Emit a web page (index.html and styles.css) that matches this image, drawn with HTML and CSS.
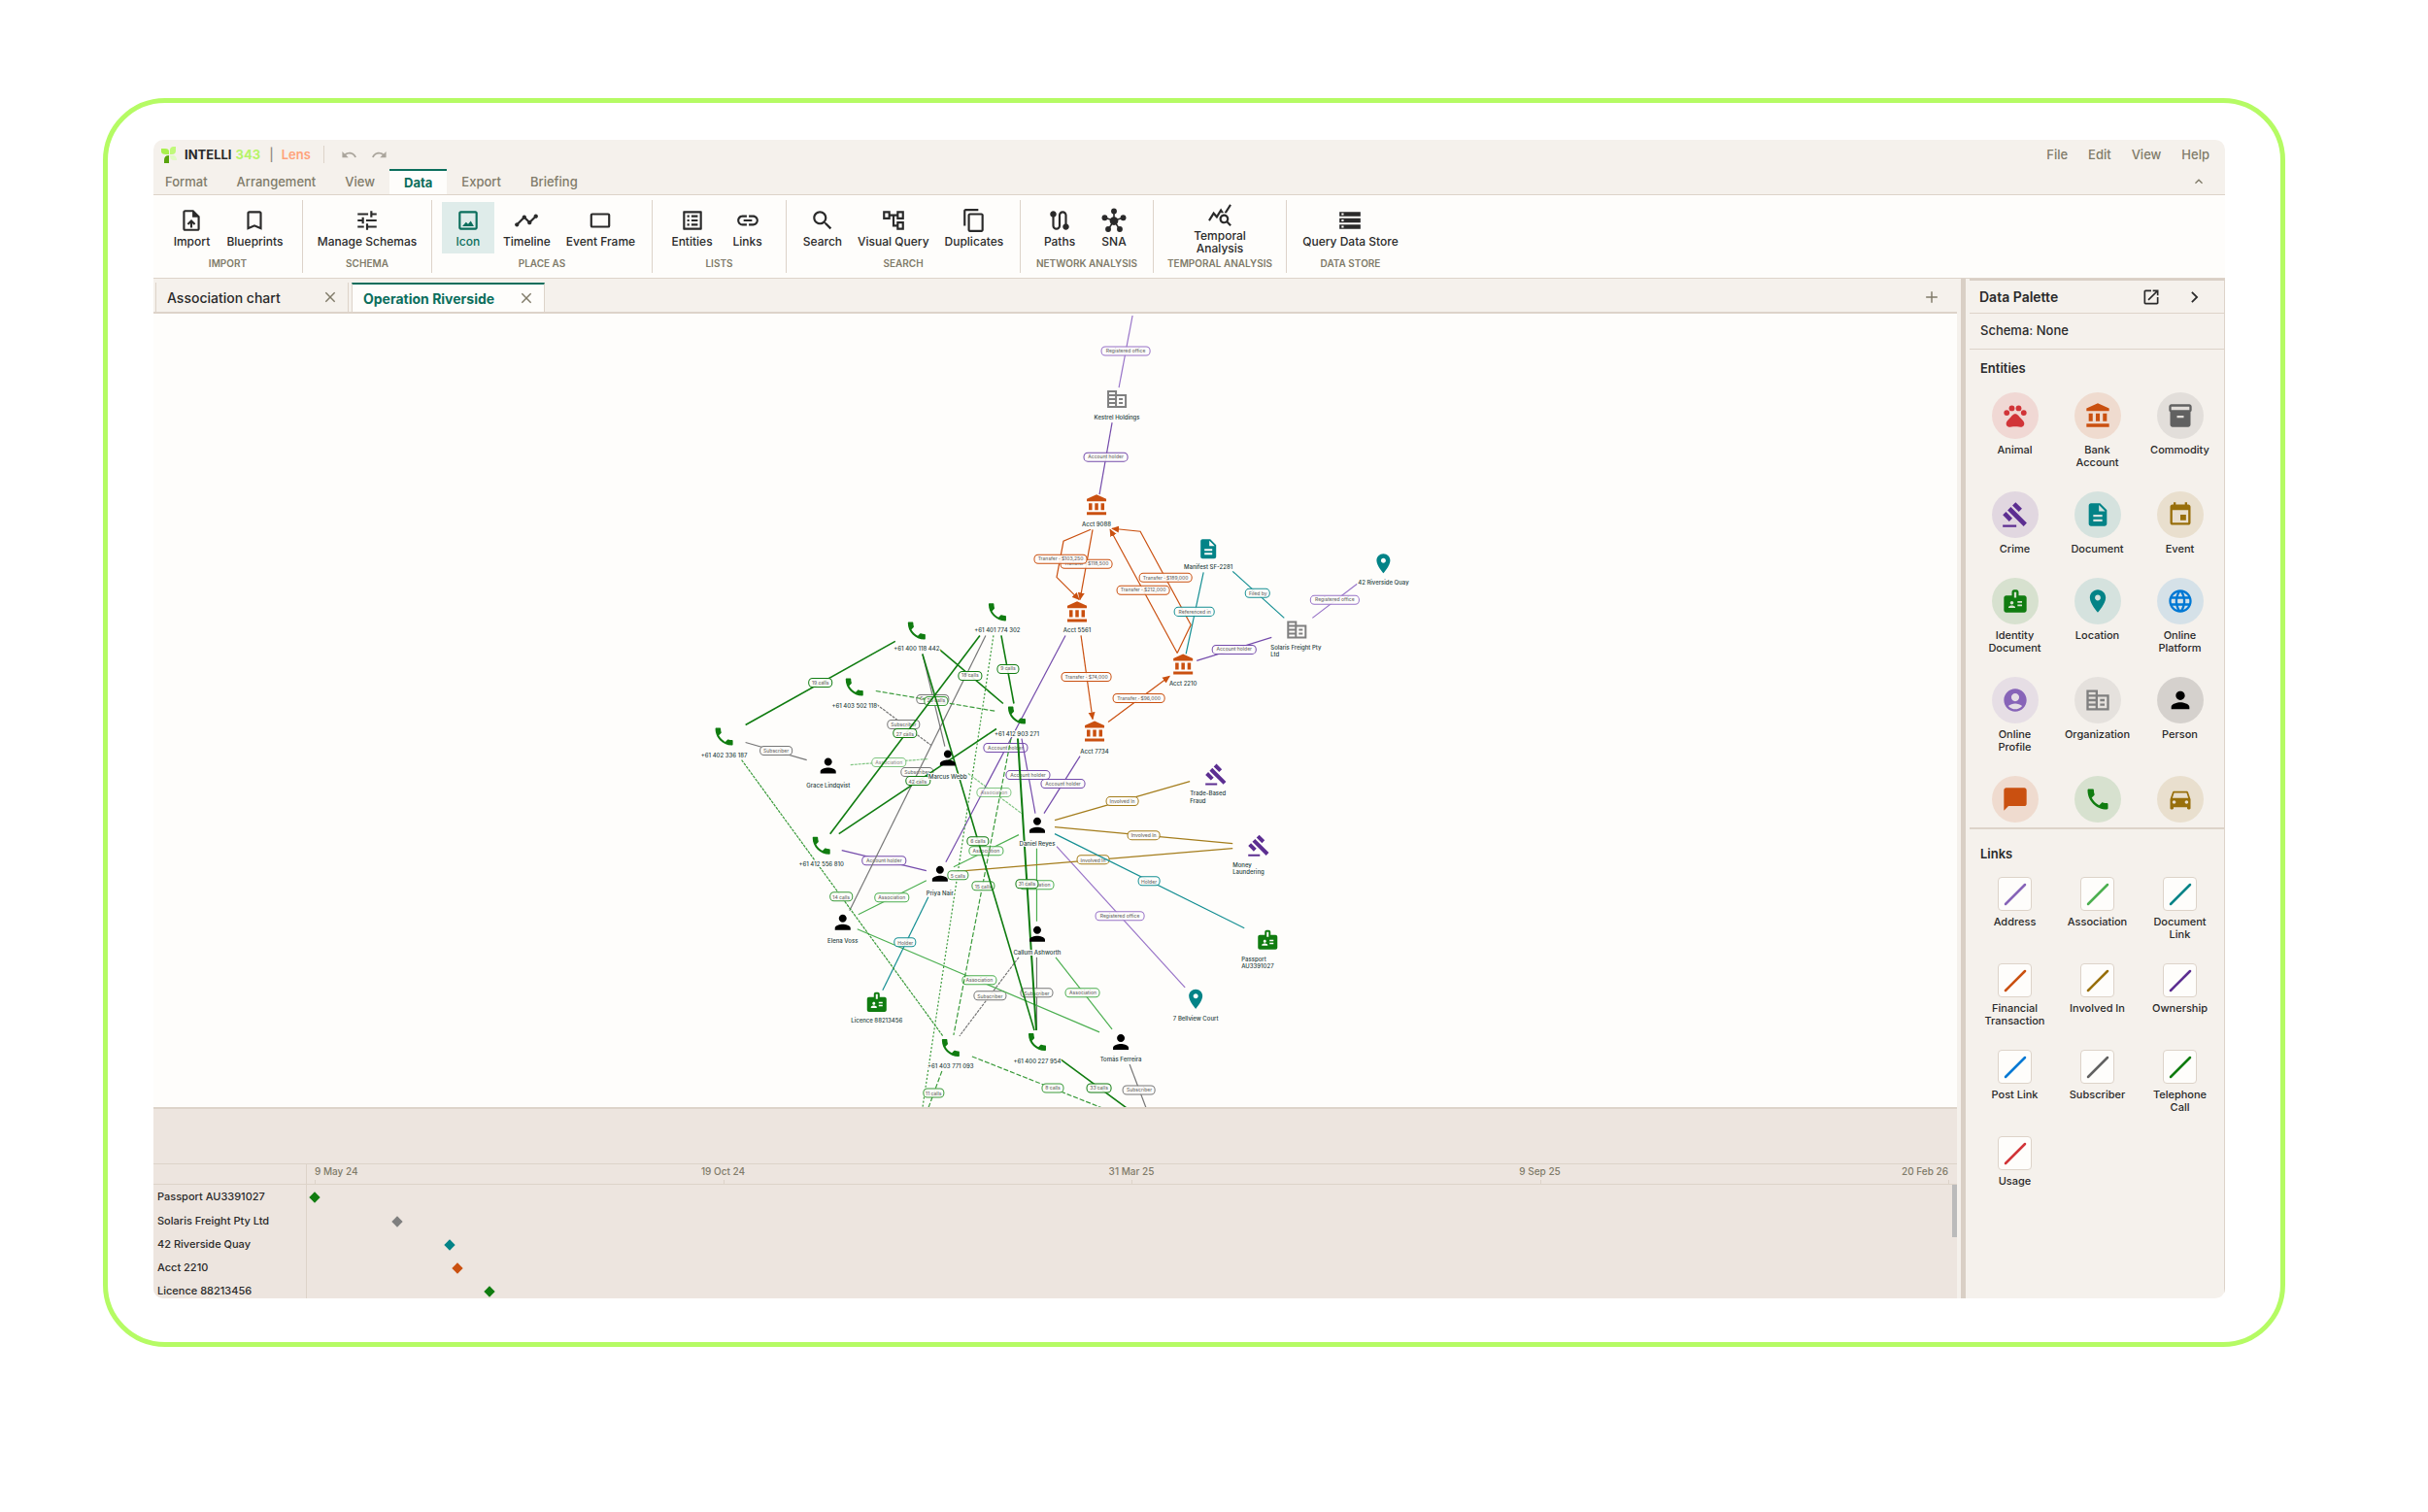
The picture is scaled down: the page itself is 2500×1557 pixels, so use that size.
FILE: index.html
```html
<!DOCTYPE html>
<html lang="en">
<head>
<meta charset="utf-8">
<title>INTELLI 343 | Lens – Operation Riverside</title>
<meta name="viewport" content="width=device-width, initial-scale=1">
<link rel="stylesheet" href="styles.css">
</head>
<body>
<svg class="sprite" aria-hidden="true">
  <symbol id="i-import" viewBox="0 0 24 24"><path d="M14 2H6c-1.1 0-1.99.9-1.99 2L4 20c0 1.1.89 2 1.99 2H18c1.1 0 2-.9 2-2V8l-6-6zm4 18H6V4h7v5h5v11zM8 15.01l1.41 1.41L11 14.84V19h2v-4.16l1.59 1.59L16 15.01 12.01 11 8 15.01z"/></symbol>
  <symbol id="i-bookmark" viewBox="0 0 24 24"><path d="M17 3H7c-1.1 0-1.99.9-1.99 2L5 21l7-3 7 3V5c0-1.1-.9-2-2-2zm0 15l-5-2.18L7 18V5h10v13z"/></symbol>
  <symbol id="i-tune" viewBox="0 0 24 24"><path d="M3 17v2h6v-2H3zM3 5v2h10V5H3zm10 16v-2h8v-2h-8v-2h-2v6h2zM7 9v2H3v2h4v2h2V9H7zm14 4v-2H11v2h10zm-6-4h2V7h4V5h-4V3h-2v6z"/></symbol>
  <symbol id="i-image" viewBox="0 0 24 24"><path d="M19 5v14H5V5h14m0-2H5c-1.1 0-2 .9-2 2v14c0 1.1.9 2 2 2h14c1.1 0 2-.9 2-2V5c0-1.1-.9-2-2-2zm-4.5 9.5l-2.5 3-2-2L6.500 17.500h11z"/></symbol>
  <symbol id="i-timeline" viewBox="0 0 24 24"><path d="M23 8c0 1.1-.9 2-2 2-.18 0-.35-.02-.51-.07l-3.56 3.55c.05.16.07.34.07.52 0 1.1-.9 2-2 2s-2-.9-2-2c0-.18.02-.36.07-.52l-2.55-2.55c-.16.05-.34.07-.52.07s-.36-.02-.52-.07l-4.55 4.56c.05.16.07.33.07.51 0 1.1-.9 2-2 2s-2-.9-2-2 .9-2 2-2c.18 0 .35.02.51.07l4.56-4.55C8.02 9.36 8 9.18 8 9c0-1.1.9-2 2-2s2 .9 2 2c0 .18-.02.36-.07.52l2.55 2.55c.16-.05.34-.07.52-.07s.36.02.52.07l3.55-3.56C19.02 8.35 19 8.18 19 8c0-1.1.9-2 2-2s2 .9 2 2z"/></symbol>
  <symbol id="i-frame" viewBox="0 0 24 24"><rect x="3.500" y="6" width="17" height="12" rx="1" fill="none" stroke="currentColor" stroke-width="2"/></symbol>
  <symbol id="i-list" viewBox="0 0 24 24"><path d="M19 5v14H5V5h14m1.1-2H3.900c-.5 0-.9.4-.9.9v16.200c0 .4.4.9.9.9h16.200c.4 0 .9-.5.9-.9V3.900c0-.5-.5-.9-.9-.9zM11 7h6v2h-6V7zm0 4h6v2h-6v-2zm0 4h6v2h-6zM7 7h2v2H7zm0 4h2v2H7zm0 4h2v2H7z"/></symbol>
  <symbol id="i-link" viewBox="0 0 24 24"><path d="M3.9 12c0-1.71 1.39-3.1 3.1-3.1h4V7H7c-2.76 0-5 2.24-5 5s2.24 5 5 5h4v-1.9H7c-1.71 0-3.1-1.39-3.1-3.1zM8 13h8v-2H8v2zm9-6h-4v1.9h4c1.71 0 3.1 1.39 3.1 3.1s-1.39 3.1-3.1 3.1h-4V17h4c2.76 0 5-2.24 5-5s-2.24-5-5-5z"/></symbol>
  <symbol id="i-search" viewBox="0 0 24 24"><path d="M15.5 14h-.79l-.28-.27C15.41 12.59 16 11.11 16 9.5 16 5.91 13.09 3 9.5 3S3 5.91 3 9.5 5.91 16 9.5 16c1.61 0 3.09-.59 4.23-1.57l.27.28v.79l5 4.99L20.49 19l-4.99-5zm-6 0C7.01 14 5 11.99 5 9.5S7.01 5 9.5 5 14 7.01 14 9.5 11.99 14 9.5 14z"/></symbol>
  <symbol id="i-tree" viewBox="0 0 24 24"><path d="M22 11V3h-7v3H9V3H2v8h7V8h2v10h4v3h7v-8h-7v3h-2V8h2v3h7zM7 9H4V5h3v4zm10 6h3v4h-3v-4zm0-10h3v4h-3V5z"/></symbol>
  <symbol id="i-copy" viewBox="0 0 24 24"><path d="M16 1H4c-1.1 0-2 .9-2 2v14h2V3h12V1zm3 4H8c-1.1 0-2 .9-2 2v14c0 1.1.9 2 2 2h11c1.1 0 2-.9 2-2V7c0-1.1-.9-2-2-2zm0 16H8V7h11v14z"/></symbol>
  <symbol id="i-route" viewBox="0 0 24 24"><path d="M19 15.18V7c0-2.21-1.79-4-4-4s-4 1.79-4 4v10c0 1.1-.9 2-2 2s-2-.9-2-2V8.82C8.16 8.4 9 7.3 9 6c0-1.66-1.34-3-3-3S3 4.34 3 6c0 1.3.84 2.4 2 2.82V17c0 2.21 1.79 4 4 4s4-1.79 4-4V7c0-1.1.9-2 2-2s2 .9 2 2v8.180c-1.16.41-2 1.51-2 2.82 0 1.66 1.34 3 3 3s3-1.34 3-3c0-1.3-.84-2.4-2-2.82z"/></symbol>
  <symbol id="i-hub" viewBox="0 0 24 24"><path d="M12 12V3M12 12L3 9.500M12 12l9-2.500M12 12l-5 8M12 12l5 8" stroke="currentColor" stroke-width="1.500"/><circle cx="12" cy="12.500" r="4"/><circle cx="12" cy="3.200" r="2.700"/><circle cx="3.200" cy="9.500" r="2.700"/><circle cx="20.800" cy="9.500" r="2.700"/><circle cx="6.500" cy="20.300" r="2.700"/><circle cx="17.500" cy="20.300" r="2.700"/></symbol>
  <symbol id="i-stats" viewBox="0 0 24 24"><path d="M19.88 18.47c.44-.7.7-1.51.7-2.39 0-2.49-2.01-4.5-4.5-4.5s-4.5 2.01-4.5 4.5 2.01 4.5 4.49 4.5c.88 0 1.7-.26 2.39-.7L21.58 23 23 21.58l-3.12-3.11zm-3.8.11c-1.38 0-2.5-1.12-2.5-2.5s1.12-2.5 2.5-2.5 2.5 1.12 2.5 2.5-1.12 2.5-2.5 2.5zm-.36-8.5c-.74.02-1.45.18-2.1.45l-.55-.83-3.8 6.18-3.01-3.52-3.63 5.81L1 17l5-8 3 3.5L13 6l2.72 4.08zm2.59.5c-.64-.28-1.33-.45-2.05-.49L21.38 2 23 3.18l-4.69 7.4z"/></symbol>
  <symbol id="i-storage" viewBox="0 0 24 24"><path d="M2 20h20v-4H2v4zm2-3h2v2H4v-2zM2 4v4h20V4H2zm4 3H4V5h2v2zm-4 7h20v-4H2v4zm2-3h2v2H4v-2z"/></symbol>
  <symbol id="i-undo" viewBox="0 0 24 24"><path d="M12.5 8c-2.65 0-5.05.99-6.9 2.6L2 7v9h9l-3.62-3.62c1.39-1.16 3.16-1.88 5.12-1.88 3.54 0 6.55 2.31 7.6 5.5l2.37-.78C21.08 11.03 17.15 8 12.5 8z"/></symbol>
  <symbol id="i-redo" viewBox="0 0 24 24"><path d="M18.4 10.6C16.55 8.99 14.15 8 11.5 8c-4.65 0-8.58 3.03-9.96 7.22L3.900 16c1.05-3.19 4.05-5.5 7.6-5.5 1.95 0 3.73.72 5.12 1.88L13 16h9V7l-3.600 3.600z"/></symbol>
  <symbol id="i-up" viewBox="0 0 24 24"><path d="M12 8l-6 6 1.410 1.410L12 10.830l4.590 4.580L18 14z"/></symbol>
  <symbol id="i-right" viewBox="0 0 24 24"><path d="M9 5L7.500 6.500 13 12l-5.500 5.500L9 19l7-7z"/></symbol>
  <symbol id="i-close" viewBox="0 0 24 24"><path d="M4 4l16 16M20 4L4 20" fill="none" stroke="currentColor" stroke-width="2.500"/></symbol>
  <symbol id="i-plus" viewBox="0 0 24 24"><path d="M12 2v20M2 12h20" fill="none" stroke="currentColor" stroke-width="2.500"/></symbol>
  <symbol id="i-open" viewBox="0 0 24 24"><path d="M19 19H5V5h7V3H5c-1.110 0-2 .9-2 2v14c0 1.100.89 2 2 2h14c1.100 0 2-.9 2-2v-7h-2v7zM14 3v2h3.590l-9.830 9.830 1.410 1.410L19 6.410V10h2V3h-7z"/></symbol>
  <symbol id="i-paw" viewBox="0 0 24 24"><circle cx="4.500" cy="9.500" r="2.500"/><circle cx="9" cy="5.500" r="2.500"/><circle cx="15" cy="5.500" r="2.500"/><circle cx="19.500" cy="9.500" r="2.500"/><path d="M17.34 14.86c-.87-1.02-1.6-1.89-2.48-2.91-.46-.54-1.05-1.08-1.75-1.32-.11-.04-.22-.07-.33-.09-.25-.04-.52-.04-.78-.04s-.53 0-.79.05c-.11.02-.22.05-.33.09-.7.24-1.28.78-1.75 1.32-.87 1.02-1.6 1.89-2.48 2.91-1.31 1.31-2.92 2.76-2.62 4.79.29 1.02 1.02 2.03 2.33 2.32.73.15 3.06-.44 5.54-.44h.18c2.48 0 4.81.58 5.54.44 1.31-.29 2.04-1.31 2.33-2.32.31-2.04-1.3-3.49-2.61-4.8z"/></symbol>
  <symbol id="i-bank" viewBox="0 0 24 24"><path d="M4 10v7h3.500v-7zM10.250 10v7h3.500v-7zM16.500 10v7H20v-7zM2 19v3h20v-3zM12 1L2 5.500V8h20V5.500z"/></symbol>
  <symbol id="i-box" viewBox="0 0 24 24"><path d="M20 2H4c-1 0-2 .9-2 2v3.010c0 .72.43 1.34 1 1.690V20c0 1.100 1.100 2 2 2h14c.9 0 2-.9 2-2V8.700c.57-.35 1-.97 1-1.690V4c0-1.100-1-2-2-2zm-5 12H9v-2h6v2zm5-7H4V4h16v3z"/></symbol>
  <symbol id="i-gavel" viewBox="0 0 24 24"><path d="M1 21h12v2H1zM5.245 8.070l2.830-2.827 14.140 14.142-2.828 2.828zM12.317 1l5.657 5.656-2.830 2.830-5.654-5.660zM3.825 9.485l5.657 5.657-2.828 2.828-5.657-5.657z"/></symbol>
  <symbol id="i-doc" viewBox="0 0 24 24"><path d="M14 2H6c-1.1 0-1.99.9-1.99 2L4 20c0 1.1.89 2 1.99 2H18c1.1 0 2-.9 2-2V8l-6-6zm2 16H8v-2h8v2zm0-4H8v-2h8v2zm-3-5V3.500L18.500 9H13z"/></symbol>
  <symbol id="i-event" viewBox="0 0 24 24"><path d="M17 12h-5v5h5v-5zM16 1v2H8V1H6v2H5c-1.110 0-1.990.9-1.990 2L3 19c0 1.100.89 2 2 2h14c1.100 0 2-.9 2-2V5c0-1.100-.9-2-2-2h-1V1h-2zm3 18H5V8h14v11z"/></symbol>
  <symbol id="i-badge" viewBox="0 0 24 24"><path d="M20 7h-5V4c0-1.1-.9-2-2-2h-2c-1.1 0-2 .9-2 2v3H4c-1.1 0-2 .9-2 2v11c0 1.1.9 2 2 2h16c1.1 0 2-.9 2-2V9c0-1.1-.9-2-2-2zM9 12c.83 0 1.5.67 1.5 1.5S9.83 15 9 15s-1.5-.67-1.5-1.5S8.17 12 9 12zm3 6H6v-.75c0-1 2-1.5 3-1.5s3 .5 3 1.5V18zm1-9h-2V4h2v5zm5 7.5h-4V15h4v1.5zm0-3h-4V12h4v1.5z"/></symbol>
  <symbol id="i-pin" viewBox="0 0 24 24"><path d="M12 2C8.13 2 5 5.13 5 9c0 5.25 7 13 7 13s7-7.75 7-13c0-3.87-3.13-7-7-7zm0 9.5c-1.38 0-2.5-1.12-2.5-2.5s1.12-2.5 2.5-2.5 2.5 1.12 2.5 2.5-1.12 2.5-2.5 2.5z"/></symbol>
  <symbol id="i-globe" viewBox="0 0 24 24"><path d="M11.99 2C6.47 2 2 6.48 2 12s4.47 10 9.99 10C17.52 22 22 17.52 22 12S17.52 2 11.99 2zm6.93 6h-2.95c-.32-1.25-.78-2.45-1.38-3.56 1.84.63 3.37 1.91 4.33 3.56zM12 4.04c.83 1.2 1.48 2.53 1.91 3.96h-3.82c.43-1.43 1.08-2.76 1.91-3.96zM4.26 14C4.1 13.36 4 12.69 4 12s.1-1.36.26-2h3.38c-.08.66-.14 1.32-.14 2 0 .68.06 1.34.14 2H4.26zm.82 2h2.95c.32 1.25.78 2.45 1.38 3.56-1.84-.63-3.37-1.9-4.33-3.56zm2.95-8H5.08c.96-1.66 2.49-2.93 4.33-3.56C8.81 5.55 8.35 6.75 8.03 8zM12 19.96c-.83-1.2-1.48-2.53-1.91-3.96h3.82c-.43 1.43-1.08 2.76-1.91 3.96zM14.34 14H9.66c-.09-.66-.16-1.32-.16-2 0-.68.07-1.35.16-2h4.68c.09.65.16 1.32.16 2 0 .68-.07 1.34-.16 2zm.25 5.56c.6-1.11 1.06-2.31 1.38-3.56h2.95c-.96 1.65-2.49 2.93-4.33 3.56zM16.36 14c.08-.66.14-1.32.14-2 0-.68-.06-1.34-.14-2h3.38c.16.64.26 1.31.26 2s-.1 1.36-.26 2h-3.38z"/></symbol>
  <symbol id="i-profile" viewBox="0 0 24 24"><path d="M12 2C6.48 2 2 6.48 2 12s4.48 10 10 10 10-4.48 10-10S17.52 2 12 2zm0 4c1.93 0 3.500 1.570 3.500 3.500S13.930 13 12 13s-3.500-1.570-3.500-3.500S10.070 6 12 6zm0 14c-2.030 0-4.430-.82-6.140-2.880C7.550 15.800 9.680 15 12 15s4.450.8 6.140 2.120C16.430 19.180 14.030 20 12 20z"/></symbol>
  <symbol id="i-org" viewBox="0 0 24 24"><path fill-rule="evenodd" d="M2 3h10v4h10v14H2zM4 5v2h6V5zM4 9v2h6V9zM4 13v2h6v-2zM4 17v2h6v-2zM12 9v10h8V9zM14 11h4v2h-4zM14 15h4v2h-4z"/></symbol>
  <symbol id="i-person" viewBox="0 0 24 24"><path d="M12 12c2.21 0 4-1.79 4-4s-1.79-4-4-4-4 1.79-4 4 1.79 4 4 4zm0 2c-2.67 0-8 1.34-8 4v2h16v-2c0-2.66-5.33-4-8-4z"/></symbol>
  <symbol id="i-chat" viewBox="0 0 24 24"><path d="M20 2H4c-1.1 0-2 .9-2 2v18l4-4h14c1.1 0 2-.9 2-2V4c0-1.1-.9-2-2-2z"/></symbol>
  <symbol id="i-phone" viewBox="0 0 24 24"><path d="M6.62 10.79c1.44 2.83 3.76 5.14 6.59 6.59l2.2-2.2c.27-.27.67-.36 1.02-.24 1.12.37 2.33.57 3.57.57.55 0 1 .45 1 1V20c0 .55-.45 1-1 1-9.39 0-17-7.61-17-17 0-.55.45-1 1-1h3.5c.55 0 1 .45 1 1 0 1.25.2 2.45.57 3.57.11.35.03.74-.25 1.02l-2.2 2.2z"/></symbol>
  <symbol id="i-car" viewBox="0 0 24 24"><path d="M18.92 6.01C18.72 5.42 18.16 5 17.5 5h-11c-.66 0-1.21.42-1.42 1.01L3 12v8c0 .55.45 1 1 1h1c.55 0 1-.45 1-1v-1h12v1c0 .55.45 1 1 1h1c.55 0 1-.45 1-1v-8l-2.08-5.99zM6.5 16c-.83 0-1.5-.67-1.5-1.5S5.67 13 6.5 13s1.5.67 1.5 1.5S7.33 16 6.5 16zm11 0c-.83 0-1.5-.67-1.5-1.5s.67-1.5 1.5-1.5 1.5.67 1.5 1.5-.67 1.5-1.5 1.5zM5 11l1.5-4.5h11L19 11H5z"/></symbol>
  <symbol id="i-line" viewBox="0 0 24 24"><path d="M2 22L22 2" fill="none" stroke="currentColor" stroke-width="2.500" stroke-linecap="round"/></symbol>
</svg>

<main class="frame">
  <div class="app">
    <header class="titlebar">
      <svg class="logo" viewBox="0 0 16 17" aria-hidden="true">
        <path d="M9 8V3.500Q9 .5 12 0h3v4q0 4-4 4z" fill="#c0f97a"/>
        <path d="M0 2h4q4 0 4 3v3H5Q0 8 0 5z" fill="#a9f04c"/>
        <path d="M8 9v8H3v-3q0-5 5-5z" fill="#58a30c"/>
        <path d="M9 9h4q3 1 3 5h-3q-4 0-4-5z" fill="#e1fbc4"/>
      </svg>
      <h1 class="brand">INTELLI <span class="brand-num">343</span></h1>
      <span class="brand-bar">|</span>
      <span class="brand-product">Lens</span>
      <span class="rule"></span>
      <button class="history" aria-label="Undo"><svg class="ico"><use href="#i-undo"/></svg></button>
      <button class="history" aria-label="Redo"><svg class="ico"><use href="#i-redo"/></svg></button>
      <nav class="menubar" aria-label="Application menu">
        <button>File</button><button>Edit</button><button>View</button><button>Help</button>
      </nav>
    </header>

    <nav class="tabs" aria-label="Ribbon tabs">
      <button>Format</button><button>Arrangement</button><button>View</button><button class="on">Data</button><button>Export</button><button>Briefing</button>
      <button class="collapse" aria-label="Collapse ribbon"><svg class="ico"><use href="#i-up"/></svg></button>
    </nav>

    <section class="ribbon" aria-label="Data tools">
      <div class="group"><div class="tools">
        <button class="tool"><svg class="ico"><use href="#i-import"/></svg>Import</button>
        <button class="tool"><svg class="ico"><use href="#i-bookmark"/></svg>Blueprints</button>
      </div><h2>IMPORT</h2></div>
      <div class="group"><div class="tools">
        <button class="tool"><svg class="ico"><use href="#i-tune"/></svg>Manage Schemas</button>
      </div><h2>SCHEMA</h2></div>
      <div class="group"><div class="tools">
        <button class="tool on"><svg class="ico"><use href="#i-image"/></svg>Icon</button>
        <button class="tool"><svg class="ico"><use href="#i-timeline"/></svg>Timeline</button>
        <button class="tool"><svg class="ico"><use href="#i-frame"/></svg>Event Frame</button>
      </div><h2>PLACE AS</h2></div>
      <div class="group"><div class="tools">
        <button class="tool"><svg class="ico"><use href="#i-list"/></svg>Entities</button>
        <button class="tool"><svg class="ico"><use href="#i-link"/></svg>Links</button>
      </div><h2>LISTS</h2></div>
      <div class="group"><div class="tools">
        <button class="tool"><svg class="ico"><use href="#i-search"/></svg>Search</button>
        <button class="tool"><svg class="ico"><use href="#i-tree"/></svg>Visual Query</button>
        <button class="tool"><svg class="ico"><use href="#i-copy"/></svg>Duplicates</button>
      </div><h2>SEARCH</h2></div>
      <div class="group"><div class="tools">
        <button class="tool"><svg class="ico"><use href="#i-route"/></svg>Paths</button>
        <button class="tool"><svg class="ico"><use href="#i-hub"/></svg>SNA</button>
      </div><h2>NETWORK ANALYSIS</h2></div>
      <div class="group"><div class="tools">
        <button class="tool"><svg class="ico"><use href="#i-stats"/></svg>Temporal<br>Analysis</button>
      </div><h2>TEMPORAL ANALYSIS</h2></div>
      <div class="group"><div class="tools">
        <button class="tool"><svg class="ico"><use href="#i-storage"/></svg>Query Data Store</button>
      </div><h2>DATA STORE</h2></div>
    </section>

    <div class="workspace">
      <div class="document">
        <div class="doc-tabs">
          <div class="doc-tab"><button class="doc-name">Association chart</button><button class="close" aria-label="Close Association chart"><svg class="ico"><use href="#i-close"/></svg></button></div>
          <div class="doc-tab on"><button class="doc-name">Operation Riverside</button><button class="close" aria-label="Close Operation Riverside"><svg class="ico"><use href="#i-close"/></svg></button></div>
          <button class="add" aria-label="New chart"><svg class="ico"><use href="#i-plus"/></svg></button>
        </div>

        <div class="canvas">
        <svg class="chart" viewBox="158 323 1857 816" preserveAspectRatio="xMidYMid slice" role="img" aria-label="Operation Riverside association chart">
          <defs><marker id="arrow" viewBox="0 0 8 8" refX="7" refY="4" markerWidth="8" markerHeight="8" markerUnits="userSpaceOnUse" orient="auto"><path d="M0 .5L8 4 0 7.500z" fill="#ca5010"/></marker></defs>

          <g class="address">
            <path d="M1166 325L1152 399"/><rect x="1134" y="357" width="50" height="9"/><text x="1159" y="363">Registered office</text>
            <path d="M1397 601L1351 636"/><rect x="1349" y="613" width="50" height="9"/><text x="1374" y="619">Registered office</text>
            <path d="M1088 871L1220 1016"/><rect x="1128" y="938" width="50" height="9"/><text x="1153" y="944">Registered office</text>
          </g>
          <g class="ownership">
            <path d="M1145 435L1132 509"/><rect x="1116" y="466" width="45" height="9"/><text x="1138.500" y="472">Account holder</text>
            <path d="M1232 680L1309 656"/><rect x="1248" y="664" width="45" height="9"/><text x="1270.500" y="670">Account holder</text>
            <path d="M1097 654L974 887"/><rect x="1013" y="765" width="45" height="9"/><text x="1035.500" y="771">Account holder</text>
            <path d="M1052 760L1066 837"/><rect x="1036" y="793" width="45" height="9"/><text x="1058.500" y="799">Account holder</text>
            <path d="M1112 778L1075 837"/><rect x="1072" y="802" width="45" height="9"/><text x="1094.500" y="808">Account holder</text>
            <path d="M867 875L954 896"/><rect x="888" y="881" width="45" height="9"/><text x="910.500" y="887">Account holder</text>
          </g>
          <g class="subscriber">
            <path d="M950 673L973 768"/><rect x="944" y="715" width="33" height="9"/><text x="960.500" y="721">Subscriber</text>
            <path class="dash" d="M903 725L959 767"/><rect x="914" y="741" width="33" height="9"/><text x="930.500" y="747">Subscriber</text>
            <path d="M768 764L831 782"/><rect x="783" y="768" width="33" height="9"/><text x="799.500" y="774">Subscriber</text>
            <rect x="928" y="790" width="33" height="9"/><text x="944.500" y="796">Subscriber</text>
            <path d="M1015 654L875 937"/>
            <path class="dash" d="M1049 985L988 1066"/><rect x="1003" y="1020" width="33" height="9"/><text x="1019.500" y="1027">Subscriber</text>
            <path d="M1067.500 985V1060"/><rect x="1051" y="1017" width="33" height="9"/><text x="1067.500" y="1024">Subscriber</text>
            <path d="M1163 1095L1180 1140"/><rect x="1156" y="1117" width="33" height="9"/><text x="1173" y="1123">Subscriber</text>
          </g>
          <g class="association">
            <g class="faint">
              <path class="dash" d="M876 787L956 781"/><rect x="898" y="780" width="35" height="9"/><text x="915.500" y="786">Association</text>
              <path class="dash" d="M997 796L1052 837"/><rect x="1006" y="811" width="35" height="9"/><text x="1023.500" y="817">Association</text>
            </g>
            <path d="M982 892L1049 859"/><rect x="998" y="871" width="35" height="9"/><text x="1015.500" y="877">Association</text>
            <path d="M954 906L884 941"/><rect x="901" y="919" width="35" height="9"/><text x="918.500" y="925">Association</text>
            <path d="M883 956L1132 1062"/><rect x="991" y="1004" width="35" height="9"/><text x="1008.500" y="1010">Association</text>
            <path d="M1067.500 873V948"/><rect x="1050" y="906" width="35" height="9"/><text x="1067.500" y="912">Association</text>
            <path d="M1087 985L1145 1059"/><rect x="1097" y="1017" width="35" height="9"/><text x="1115" y="1023">Association</text>
          </g>
          <g class="involved">
            <path d="M1086 844L1225 804"/><rect x="1139" y="820" width="33" height="9"/><text x="1155.500" y="826">Involved In</text>
            <path d="M1086 851L1269 868"/><rect x="1161" y="855" width="33" height="9"/><text x="1177.500" y="861">Involved In</text>
            <path d="M982 897L1269 873"/><rect x="1109" y="880" width="33" height="9"/><text x="1125.500" y="887">Involved In</text>
          </g>
          <g class="document-link">
            <path d="M1086 858L1281 955"/><rect x="1172" y="902" width="22" height="9"/><text x="1183" y="909">Holder</text>
            <path d="M956 923L909 1019"/><rect x="921" y="965" width="22" height="9"/><text x="932.500" y="972">Holder</text>
            <path d="M1269 588L1322 636"/><rect x="1282" y="606" width="25" height="9"/><text x="1295" y="613">Filed by</text>
          </g>
          <g class="transfer">
            <path marker-end="url(#arrow)" d="M1125 545L1112 617"/><rect x="1092" y="576" width="53" height="9"/><text x="1118.500" y="582">Transfer · $118,500</text>
            <path marker-end="url(#arrow)" d="M1123 545L1095 557L1088 594L1111 617"/><rect x="1065" y="571" width="54" height="9"/><text x="1092" y="577">Transfer · $103,250</text>
            <path marker-end="url(#arrow)" d="M1212 672L1226 643L1174 547L1145 544"/><rect x="1173" y="590" width="54" height="9"/><text x="1200" y="597">Transfer · $189,000</text>
            <path marker-end="url(#arrow)" d="M1212 672L1143 545"/><rect x="1150" y="603" width="54" height="9"/><text x="1177" y="609">Transfer · $212,000</text>
            <path marker-end="url(#arrow)" d="M1113 654L1125 740"/><rect x="1093" y="692" width="51" height="9"/><text x="1118.500" y="699">Transfer · $74,000</text>
            <path marker-end="url(#arrow)" d="M1141 743L1204 696"/><rect x="1146" y="714" width="53" height="9"/><text x="1172.500" y="721">Transfer · $96,000</text>
          </g>
          <g class="document-link">
            <path d="M1239 589L1221 673"/><rect x="1209" y="625" width="41" height="9"/><text x="1230" y="632">Referenced in</text>
          </g>
          <g class="call light">
            <path class="dotted" d="M1023 654L950 1140"/><rect x="976" y="896" width="21" height="9"/><text x="986.500" y="903">5 calls</text>
            <path class="long" d="M902 711L1026 732"/><rect x="952" y="717" width="24" height="9"/><text x="964" y="723">25 calls</text>
            <path class="dash" d="M764 782L971 1066"/><rect x="855" y="918" width="23" height="9"/><text x="866.500" y="925">14 calls</text>
            <path class="long" d="M1041 760L982 1065"/><rect x="1001" y="907" width="23" height="9"/><text x="1012.500" y="914">15 calls</text>
            <path class="long" d="M970 1102L956 1140"/><rect x="951" y="1120" width="21" height="9"/><text x="961.500" y="1127">11 calls</text>
            <path class="long" d="M1001 1087L1135 1140"/><rect x="1073" y="1115" width="22" height="9"/><text x="1084" y="1121">8 calls</text>
          </g>
          <g class="call">
            <path d="M922 660L768 746"/><rect x="833" y="698" width="24" height="9"/><text x="845" y="705">19 calls</text>
            <path d="M967 668L1033 724"/><rect x="987" y="691" width="24" height="9"/><text x="999" y="697">18 calls</text>
            <path d="M1031 654L1044 724"/><rect x="1027" y="684" width="22" height="9"/><text x="1038" y="690">9 calls</text>
            <path d="M1009 654L855 858"/><rect x="920" y="750" width="24" height="9"/><text x="932" y="757">27 calls</text>
            <path d="M1026 750L864 858"/><rect x="933" y="799" width="25" height="9"/><text x="945" y="806">42 calls</text>
            <path d="M950 673L1065 1060"/><rect x="996" y="861" width="22" height="9"/><text x="1007" y="867">6 calls</text>
            <path class="heavy" d="M1048 760L1067 1060"/><rect x="1046" y="905" width="23" height="9"/><text x="1057.500" y="911">31 calls</text>
            <path d="M1092 1090L1160 1140"/><rect x="1119" y="1115" width="25" height="9"/><text x="1131.500" y="1121">33 calls</text>
          </g>

          <g class="nodes">
            <g class="c-org"><use href="#i-org" x="1138" y="399" width="24" height="24"/><use href="#i-org" x="1323" y="636" width="24" height="24"/></g>
            <g class="c-bank"><use href="#i-bank" x="1117" y="508" width="24" height="24"/><use href="#i-bank" x="1097" y="618" width="24" height="24"/><use href="#i-bank" x="1206" y="672" width="24" height="24"/><use href="#i-bank" x="1115" y="741" width="24" height="24"/></g>
            <g class="c-teal"><use href="#i-doc" x="1232" y="553" width="24" height="24"/><use href="#i-pin" x="1412" y="568" width="24" height="24"/><use href="#i-pin" x="1219" y="1016" width="24" height="24"/></g>
            <g class="c-crime"><use href="#i-gavel" x="1240" y="785" width="24" height="24"/><use href="#i-gavel" x="1284" y="858" width="24" height="24"/></g>
            <g class="c-green"><use href="#i-badge" x="1293" y="955" width="24" height="24"/><use href="#i-badge" x="891" y="1019" width="24" height="24"/><use href="#i-phone" x="1015" y="618" width="24" height="24"/><use href="#i-phone" x="932" y="637" width="24" height="24"/><use href="#i-phone" x="868" y="695" width="24" height="24"/><use href="#i-phone" x="734" y="746" width="24" height="24"/><use href="#i-phone" x="1035" y="724" width="24" height="24"/><use href="#i-phone" x="834" y="858" width="24" height="24"/><use href="#i-phone" x="967" y="1066" width="24" height="24"/><use href="#i-phone" x="1056" y="1060" width="24" height="24"/></g>
            <g class="c-person"><use href="#i-person" x="841" y="776" width="24" height="24"/><use href="#i-person" x="964" y="768" width="24" height="24"/><use href="#i-person" x="1056" y="837" width="24" height="24"/><use href="#i-person" x="956" y="887" width="24" height="24"/><use href="#i-person" x="856" y="937" width="24" height="24"/><use href="#i-person" x="1056" y="949" width="24" height="24"/><use href="#i-person" x="1142" y="1060" width="24" height="24"/></g>
            <text x="1150" y="432">Kestrel Holdings</text>
            <text x="1129" y="542">Acct 9088</text>
            <text x="1109" y="651">Acct 5561</text>
            <text x="1218" y="706">Acct 2210</text>
            <text x="1127" y="775">Acct 7734</text>
            <text x="1244" y="586">Manifest SF-2281</text>
            <text x="1424" y="602">42 Riverside Quay</text>
            <text class="start"><tspan x="1308" y="669">Solaris Freight Pty</tspan><tspan x="1308" y="676">Ltd</tspan></text>
            <text x="1027" y="651">+61 401 774 302</text>
            <text x="944" y="670">+61 400 118 442</text>
            <text x="880" y="729">+61 403 502 118</text>
            <text x="746" y="779">+61 402 336 187</text>
            <text x="1047" y="757">+61 412 903 271</text>
            <text x="846" y="891">+61 412 556 810</text>
            <text x="979" y="1099">+61 403 771 093</text>
            <text x="1068" y="1094">+61 400 227 954</text>
            <text x="853" y="810">Grace Lindqvist</text>
            <text x="976" y="801">Marcus Webb</text>
            <text x="1068" y="870">Daniel Reyes</text>
            <text x="968" y="921">Priya Nair</text>
            <text x="868" y="970">Elena Voss</text>
            <text x="1068" y="982">Callum Ashworth</text>
            <text x="1154" y="1092">Tomás Ferreira</text>
            <text x="903" y="1052">Licence 88213456</text>
            <text x="1231" y="1050">7 Bellview Court</text>
            <text class="start"><tspan x="1225" y="818">Trade-Based</tspan><tspan x="1225" y="826">Fraud</tspan></text>
            <text class="start"><tspan x="1269" y="892">Money</tspan><tspan x="1269" y="899">Laundering</tspan></text>
            <text class="start"><tspan x="1278" y="989">Passport</tspan><tspan x="1278" y="996">AU3391027</tspan></text>
          </g>
        </svg>
        </div>

        <section class="timeline" aria-label="Timeline">
          <div class="overview"></div>
          <div class="axis"><div class="axis-pad"></div>
            <ol class="dates"><li>9 May 24</li><li>19 Oct 24</li><li>31 Mar 25</li><li>9 Sep 25</li><li>20 Feb 26</li></ol>
          </div>
          <div class="lanes">
            <ul class="rows">
              <li><span class="row-name">Passport AU3391027</span><div class="lane"><i class="dot c-green" style="left:0%"></i></div></li>
              <li><span class="row-name">Solaris Freight Pty Ltd</span><div class="lane"><i class="dot c-org" style="left:5.05%"></i></div></li>
              <li><span class="row-name">42 Riverside Quay</span><div class="lane"><i class="dot c-teal" style="left:8.29%"></i></div></li>
              <li><span class="row-name">Acct 2210</span><div class="lane"><i class="dot c-bank" style="left:8.74%"></i></div></li>
              <li><span class="row-name">Licence 88213456</span><div class="lane"><i class="dot c-green" style="left:10.73%"></i></div></li>
            </ul>
            <div class="scroll"></div>
          </div>
        </section>
      </div>

      <div class="splitter"></div>

      <aside class="palette" aria-label="Data Palette">
        <header class="palette-head">
          <h2>Data Palette</h2>
          <button aria-label="Open in new window"><svg class="ico"><use href="#i-open"/></svg></button>
          <button aria-label="Collapse palette"><svg class="ico"><use href="#i-right"/></svg></button>
        </header>
        <p class="schema">Schema: None</p>
        <section class="entities">
          <h3>Entities</h3>
          <div class="tiles">
            <button class="tile"><span class="disc c-red"><svg class="ico"><use href="#i-paw"/></svg></span>Animal</button>
            <button class="tile"><span class="disc c-bank"><svg class="ico"><use href="#i-bank"/></svg></span>Bank<br>Account</button>
            <button class="tile"><span class="disc c-gray"><svg class="ico"><use href="#i-box"/></svg></span>Commodity</button>
            <button class="tile"><span class="disc c-crime"><svg class="ico"><use href="#i-gavel"/></svg></span>Crime</button>
            <button class="tile"><span class="disc c-teal"><svg class="ico"><use href="#i-doc"/></svg></span>Document</button>
            <button class="tile"><span class="disc c-gold"><svg class="ico"><use href="#i-event"/></svg></span>Event</button>
            <button class="tile"><span class="disc c-green"><svg class="ico"><use href="#i-badge"/></svg></span>Identity<br>Document</button>
            <button class="tile"><span class="disc c-teal"><svg class="ico"><use href="#i-pin"/></svg></span>Location</button>
            <button class="tile"><span class="disc c-blue"><svg class="ico"><use href="#i-globe"/></svg></span>Online<br>Platform</button>
            <button class="tile"><span class="disc c-violet"><svg class="ico"><use href="#i-profile"/></svg></span>Online<br>Profile</button>
            <button class="tile"><span class="disc c-org"><svg class="ico"><use href="#i-org"/></svg></span>Organization</button>
            <button class="tile"><span class="disc c-person"><svg class="ico"><use href="#i-person"/></svg></span>Person</button>
            <button class="tile" aria-label="Message"><span class="disc c-bank"><svg class="ico"><use href="#i-chat"/></svg></span></button>
            <button class="tile" aria-label="Phone"><span class="disc c-green"><svg class="ico"><use href="#i-phone"/></svg></span></button>
            <button class="tile" aria-label="Vehicle"><span class="disc c-gold"><svg class="ico"><use href="#i-car"/></svg></span></button>
          </div>
        </section>
        <section class="links">
          <h3>Links</h3>
          <div class="tiles">
            <button class="tile"><span class="swatch c-violet"><svg class="ico"><use href="#i-line"/></svg></span>Address</button>
            <button class="tile"><span class="swatch c-assoc"><svg class="ico"><use href="#i-line"/></svg></span>Association</button>
            <button class="tile"><span class="swatch c-teal"><svg class="ico"><use href="#i-line"/></svg></span>Document<br>Link</button>
            <button class="tile"><span class="swatch c-bank"><svg class="ico"><use href="#i-line"/></svg></span>Financial<br>Transaction</button>
            <button class="tile"><span class="swatch c-gold"><svg class="ico"><use href="#i-line"/></svg></span>Involved In</button>
            <button class="tile"><span class="swatch c-crime"><svg class="ico"><use href="#i-line"/></svg></span>Ownership</button>
            <button class="tile"><span class="swatch c-blue"><svg class="ico"><use href="#i-line"/></svg></span>Post Link</button>
            <button class="tile"><span class="swatch c-gray"><svg class="ico"><use href="#i-line"/></svg></span>Subscriber</button>
            <button class="tile"><span class="swatch c-green"><svg class="ico"><use href="#i-line"/></svg></span>Telephone<br>Call</button>
            <button class="tile"><span class="swatch c-red"><svg class="ico"><use href="#i-line"/></svg></span>Usage</button>
          </div>
        </section>
      </aside>
    </div>
  </div>
</main>
</body>
</html>
```
FILE: styles.css
```css
:root {
  --bg: #f5f1ec;
  --paper: #fefdfb;
  --sand: #ede5df;
  --line: #ddd3c9;
  --ink: #2a2a2a;
  --muted: #807b69;
  --accent: #0b6e5c;
}
* { box-sizing: border-box; }
body {
  margin: 0;
  min-height: 100vh;
  padding: 101px 147px 170px 106px;
  display: flex;
  background: #fff;
  color: var(--ink);
  font-family: Inter, "Liberation Sans", sans-serif;
  font-size: 13px;
  font-weight: 500;
}
h1, h2, h3, p, ul, ol { margin: 0; padding: 0; font-size: inherit; font-weight: inherit; }
ul, ol { list-style: none; }
button { margin: 0; padding: 0; border: 0; background: none; color: inherit; font: inherit; cursor: pointer; }
.sprite { position: absolute; width: 0; height: 0; }
.ico { display: block; width: 24px; height: 24px; fill: currentColor; flex: none; }

.c-red { color: #d13438; }
.c-bank { color: #ca5010; }
.c-gray { color: #616161; }
.c-crime { color: #5c2e91; }
.c-teal { color: #038387; }
.c-gold { color: #986f0b; }
.c-green { color: #107c10; }
.c-blue { color: #0078d4; }
.c-violet { color: #8764b8; }
.c-org { color: #7f7f7f; }
.c-person { color: #000; }
.c-assoc { color: #4caf50; }

.frame {
  flex: 1;
  min-width: 0;
  display: flex;
  padding: 38px 57px 45px 47px;
  border: 5px solid #b5fb64;
  border-radius: 64px;
}
.app {
  flex: 1;
  min-width: 0;
  display: flex;
  flex-direction: column;
  overflow: hidden;
  border-radius: 10px;
  background: var(--bg);
}

/* Title bar */
.titlebar { display: flex; align-items: center; height: 30px; padding: 0 16px 0 8px; }
.logo { width: 16px; height: 17px; margin-right: 8px; }
.brand { font-weight: 700; }
.brand-num { margin-left: 1px; color: #b5f468; }
.brand-bar { margin: 0 8px 0 9px; color: #8f8a80; }
.brand-product { color: #ffa27a; font-weight: 600; }
.rule { width: 1px; height: 18px; margin: 0 17px 0 13px; background: var(--line); }
.history { margin-right: 14px; color: #aaa59c; }
.history .ico { width: 17px; height: 17px; }
.menubar { display: flex; gap: 21px; margin-left: auto; color: var(--muted); }

/* Ribbon tabs */
.tabs { display: flex; align-items: stretch; gap: 30px; height: 27px; padding: 0 19px 0 12px; border-bottom: 1px solid var(--line); color: var(--muted); }
.tabs .on { margin: 0 -15px; padding: 0 15px; border-top: 2px solid var(--accent); background: var(--paper); color: var(--accent); font-weight: 700; }
.tabs .collapse { margin-left: auto; }
.collapse .ico { width: 16px; height: 16px; }

/* Ribbon */
.ribbon {
  display: grid;
  grid-template-columns: 154px 133px 227px 138px 241px 137px 137px 131px;
  padding: 5px 0;
  height: 86px;
  border-bottom: 1px solid var(--line);
  background: var(--paper);
}
.group { display: flex; flex-direction: column; align-items: center; border-right: 1px solid var(--line); }
.group:last-child { border-right: 0; }
.group h2 { margin: auto 0 3px; color: var(--muted); font-size: 10px; font-weight: 600; line-height: 14px; white-space: nowrap; }
.tools { display: flex; gap: 2px; margin-top: 2px; }
.tool { display: flex; flex-direction: column; align-items: center; justify-content: center; min-width: 54px; height: 53px; padding: 0 7px; font-size: 12px; line-height: 13px; white-space: nowrap; }
.tool .ico { width: 26px; height: 26px; margin-bottom: 2px; }
.tool.on { background: #dfecea; color: var(--accent); }

/* Workspace */
.workspace { flex: 1; min-height: 0; display: flex; }
.document { flex: 1; min-width: 0; display: flex; flex-direction: column; }
.doc-tabs { display: flex; align-items: stretch; gap: 3px; height: 36px; padding: 4px 19px 0 2px; border-bottom: 2px solid var(--line); }
.doc-tab { display: flex; align-items: center; justify-content: space-between; gap: 24px; width: 199px; padding: 0 11px; border: 1px solid var(--line); border-width: 0 1px; font-size: 14px; }
.doc-tab.on { border-top: 2px solid var(--accent); background: var(--paper); color: var(--accent); font-weight: 700; }
.doc-name { white-space: nowrap; }
.close { color: var(--muted); }
.close .ico { width: 14px; height: 14px; }
.add { margin-left: auto; color: var(--muted); }
.add .ico { width: 14px; height: 14px; }

.canvas { flex: 1; min-height: 0; display: flex; background: var(--paper); }
.chart { display: block; width: 100%; height: 100%; font-size: 5px; }
.chart path, .chart rect { stroke: currentColor; }
.chart path { fill: none; stroke-width: 1.2; }
.chart marker path { fill: #ca5010; stroke: none; }
.chart rect { fill: var(--paper); fill-opacity: .9; rx: 4px; stroke-width: 1; }
.chart text { fill: #6e6e6e; text-anchor: middle; }
.address { color: #9873c8; }
.ownership { color: #744bab; }
.subscriber { color: #777; }
.association { color: #4caf50; }
.involved { color: #a47d1c; }
.document-link { color: #158f93; }
.transfer { color: #ca5010; }
.call { color: #107c10; }
.chart .call path { stroke-width: 1.6; }
.chart .call .heavy { stroke-width: 2; }
.chart .light path { stroke-width: 1.2; }
.light { color: #3b9b3b; }
.faint { opacity: .7; }
.dash { stroke-dasharray: 3 1; }
.dotted { stroke-dasharray: 2 2; }
.long { stroke-dasharray: 5 2; }
.nodes use { fill: currentColor; }
.chart .nodes text { fill: #1f4140; font-size: 6px; stroke: var(--paper); stroke-width: 2px; paint-order: stroke; }
.chart .nodes .start { text-anchor: start; }

/* Timeline */
.timeline { border-top: 2px solid var(--line); background: var(--sand); }
.overview { height: 57px; border-bottom: 1px solid var(--line); }
.axis { display: flex; height: 21px; border-bottom: 1px solid var(--line); }
.axis-pad { width: 158px; border-right: 1px solid var(--line); }
.dates { flex: 1; display: flex; justify-content: space-between; padding: 0 9px 0 8px; color: var(--muted); font-size: 10px; line-height: 15px; white-space: nowrap; }
.dates li { position: relative; display: flex; justify-content: center; width: 0; }
.dates li:first-child { justify-content: flex-start; }
.dates li:last-child { justify-content: flex-end; }
.dates li::after { content: ""; position: absolute; left: 0; bottom: 0; width: 1px; height: 4px; background: var(--line); }
.lanes { display: flex; }
.rows { flex: 1; height: 117px; overflow: hidden; }
.rows li { display: flex; align-items: stretch; height: 24px; }
.rows li:first-child { height: 25px; }
.row-name { width: 158px; padding-left: 4px; border-right: 1px solid var(--line); font-size: 11px; line-height: 25px; white-space: nowrap; }
.lane { position: relative; flex: 1; margin: 0 4px 0 8px; }
.lane .dot { position: absolute; top: 9px; width: 8px; height: 8px; margin-left: -4px; background: currentColor; transform: rotate(45deg); }
.scroll { width: 5px; height: 54px; background: #bbb; }

.splitter { width: 13px; border: solid var(--bg); border-width: 0 4px; background: #d9cfc5; }

/* Palette */
.palette { width: 263px; display: flex; flex-direction: column; border-top: 2px solid #d9cfc5; border-right: 1px solid var(--line); }
.palette-head { display: flex; align-items: center; height: 34px; padding: 0 20px 0 10px; border-bottom: 1px solid var(--line); }
.palette-head h2 { flex: 1; font-weight: 600; font-size: 14px; }
.palette-head button + button { margin-left: 25px; }
.palette-head .ico { width: 20px; height: 20px; }
.schema { height: 37px; padding-left: 11px; border-bottom: 1px solid var(--line); line-height: 35px; }
.palette h3 { padding-left: 11px; font-weight: 600; line-height: 16px; }
.entities { height: 494px; padding-top: 11px; border-bottom: 2px solid var(--line); }
.entities .tiles { height: 443px; margin-top: 17px; overflow: hidden; }
.links { padding-top: 17px; }
.links .tiles { margin-top: 16px; }
.tiles { display: grid; grid-template-columns: repeat(3, 85px); row-gap: 23px; align-content: start; padding-left: 4px; }
.tile { display: flex; flex-direction: column; align-items: center; justify-content: flex-start; gap: 5px; font-size: 11px; line-height: 13px; text-align: center; }
.disc { display: flex; align-items: center; justify-content: center; width: 48px; height: 48px; border-radius: 50%; background: color-mix(in srgb, currentColor 13%, transparent); }
.disc .ico { width: 28px; height: 28px; }
.swatch { display: flex; align-items: center; justify-content: center; width: 35px; height: 35px; border: 1px solid var(--line); border-radius: 4px; background: var(--paper); }
.swatch .ico { width: 24px; height: 24px; }
```
